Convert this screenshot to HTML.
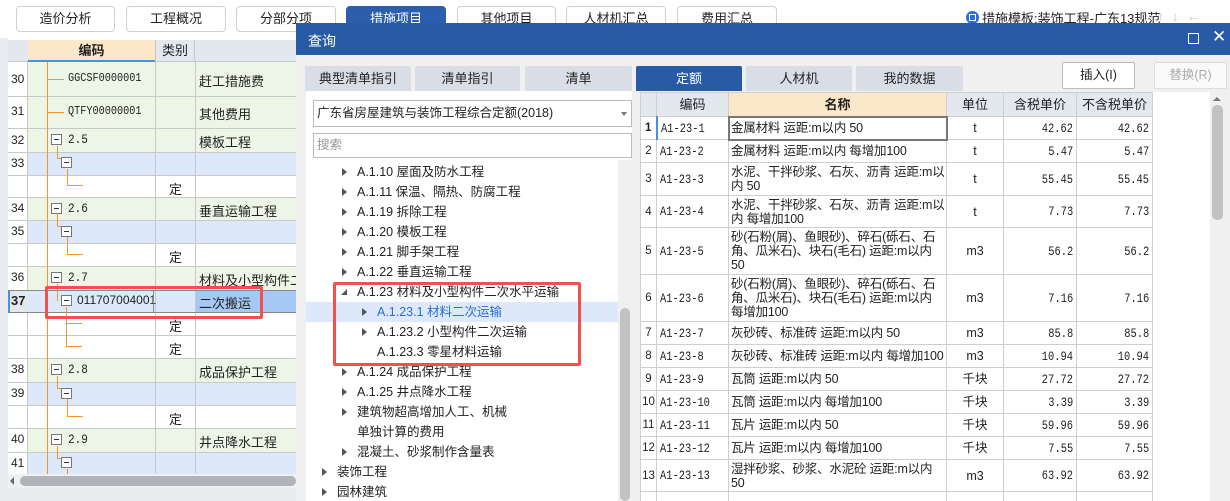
<!DOCTYPE html>
<html><head><meta charset="utf-8"><style>
*{margin:0;padding:0;box-sizing:border-box}
html,body{width:1230px;height:501px;overflow:hidden}
body{background:#fff;position:relative;font-family:"Liberation Sans","Noto Sans CJK SC",sans-serif;font-size:12px;color:#222}
div{position:absolute}
.btn{top:6px;height:26px;border:1px solid #d0d0d0;border-radius:4px;background:#fff;text-align:center;line-height:24px;font-size:13px}
.mono{font-family:"Liberation Mono","Noto Sans CJK SC",monospace;font-size:12px;transform:scaleX(0.85);transform-origin:left}
.tab{top:66px;height:25px;background:#d9dee6;text-align:center;line-height:25px;font-size:13px;border-radius:2px 2px 0 0}
.tr{left:0;font-size:12.5px;height:20px;line-height:20px;white-space:nowrap}
.arr{width:0;height:0;border-left:5px solid #555;border-top:4px solid transparent;border-bottom:4px solid transparent}
.ln{background:#f0962e}
.bx{width:11px;height:11px;border:1px solid #777;background:#fff}
.bx:after{content:"";position:absolute;left:2px;top:4px;width:5px;height:1px;background:#333}
td{border:1px solid #cfcfcf;padding:0 3px;vertical-align:middle;line-height:14px}
td.m{white-space:nowrap;overflow:hidden;padding:0 2px;letter-spacing:-0.2px}
td.n{padding:0;text-align:center;font-size:11.5px}
td.c span{display:inline-block;font-family:"Liberation Mono",monospace;font-size:13px;transform:scaleX(0.8);transform-origin:left}
td.u{text-align:center}
td.p{text-align:right}
td.p span{display:inline-block;font-family:"Liberation Mono",monospace;font-size:13px;transform:scaleX(0.8);transform-origin:right}
tr.h td{background:#e3e8ef;text-align:center;height:24px;font-size:13px}
</style></head><body>
<div style="left:0;top:0;width:8px;height:501px;background:#e8ebf0"></div>
<div style="left:0;top:0;width:1230px;height:38px;background:#fff"></div>
<div class="btn" style="left:16px;width:99px">造价分析</div>
<div class="btn" style="left:126px;width:100px">工程概况</div>
<div class="btn" style="left:236px;width:100px">分部分项</div>
<div class="btn" style="left:346px;width:100px;background:#2b5fae;color:#fff;border-color:#2b5fae">措施项目</div>
<div class="btn" style="left:457px;width:99px">其他项目</div>
<div class="btn" style="left:566px;width:100px">人材机汇总</div>
<div class="btn" style="left:677px;width:100px">费用汇总</div>
<div style="left:966px;top:11px;width:13px;height:13px;border-radius:50%;background:#2b6fd6"></div>
<div style="left:969px;top:14px;width:7px;height:7px;border:1px solid #fff"></div>
<div style="left:982px;top:8px;font-size:13px">措施模板:装饰工程-广东13规范</div>
<div style="left:1157px;top:8px;font-size:14px;color:#c8c8c8">↑ &nbsp;↓ &nbsp;←</div>

<div style="left:8px;top:40px;width:290px;height:22px;background:#e3e8ef;border-bottom:1px solid #c8c8c8"></div>
<div style="left:28px;top:40px;width:127px;height:22px;background:#fde7c9;border-bottom:2px solid #4a90e2;text-align:center;line-height:21px;font-weight:bold;font-size:13px">编码</div>
<div style="left:155px;top:40px;width:40px;height:22px;border-left:1px solid #c8c8c8;border-right:1px solid #c8c8c8;text-align:center;line-height:22px;font-size:13px">类别</div>

<div style="left:8px;top:62px;width:288px;height:412px;background:#fff"></div>
<div style="left:8px;top:62px;width:288px;height:66px;background:#edf6e6"></div>
<div style="left:8px;top:128px;width:288px;height:24px;background:#edf6e6"></div>
<div style="left:8px;top:152px;width:288px;height:23px;background:#dde8fa"></div>
<div style="left:8px;top:197px;width:288px;height:23px;background:#edf6e6"></div>
<div style="left:8px;top:220px;width:288px;height:23px;background:#dde8fa"></div>
<div style="left:8px;top:266px;width:288px;height:24px;background:#edf6e6"></div>
<div style="left:8px;top:290px;width:288px;height:22px;background:#dde8fa"></div>
<div style="left:195px;top:290px;width:101px;height:22px;background:#a6c8f5"></div>
<div style="left:8px;top:358px;width:288px;height:24px;background:#edf6e6"></div>
<div style="left:8px;top:382px;width:288px;height:23px;background:#dde8fa"></div>
<div style="left:8px;top:428px;width:288px;height:24px;background:#edf6e6"></div>
<div style="left:8px;top:452px;width:288px;height:22px;background:#dde8fa"></div>
<div style="left:8px;top:62px;width:20px;height:412px;background:#fff;border-right:1px solid #c8c8c8"></div>
<div style="left:8px;top:290px;width:20px;height:22px;background:#e3e8ef;border-left:2px solid #4a90e2"></div>
<div style="left:155px;top:62px;width:1px;height:412px;background:#c8c8c8"></div>
<div style="left:195px;top:62px;width:1px;height:412px;background:#c8c8c8"></div>
<div style="left:8px;top:96px;width:288px;height:1px;background:#c8c8c8"></div>
<div style="left:8px;top:128px;width:288px;height:1px;background:#c8c8c8"></div>
<div style="left:8px;top:152px;width:288px;height:1px;background:#c8c8c8"></div>
<div style="left:8px;top:175px;width:288px;height:1px;background:#c8c8c8"></div>
<div style="left:8px;top:197px;width:288px;height:1px;background:#c8c8c8"></div>
<div style="left:8px;top:220px;width:288px;height:1px;background:#c8c8c8"></div>
<div style="left:8px;top:243px;width:288px;height:1px;background:#c8c8c8"></div>
<div style="left:8px;top:266px;width:288px;height:1px;background:#c8c8c8"></div>
<div style="left:8px;top:290px;width:288px;height:1px;background:#888"></div>
<div style="left:8px;top:312px;width:288px;height:1px;background:#888"></div>
<div style="left:8px;top:335px;width:288px;height:1px;background:#c8c8c8"></div>
<div style="left:8px;top:358px;width:288px;height:1px;background:#c8c8c8"></div>
<div style="left:8px;top:382px;width:288px;height:1px;background:#c8c8c8"></div>
<div style="left:8px;top:405px;width:288px;height:1px;background:#c8c8c8"></div>
<div style="left:8px;top:428px;width:288px;height:1px;background:#c8c8c8"></div>
<div style="left:8px;top:452px;width:288px;height:1px;background:#c8c8c8"></div>
<div style="left:11px;top:72px">30</div>
<div style="left:11px;top:104px">31</div>
<div style="left:11px;top:133px">32</div>
<div style="left:11px;top:156px">33</div>
<div style="left:11px;top:201px">34</div>
<div style="left:11px;top:224px">35</div>
<div style="left:11px;top:270px">36</div>
<div style="left:11px;top:293px;font-weight:bold;font-size:13px">37</div>
<div style="left:11px;top:362px">38</div>
<div style="left:11px;top:386px">39</div>
<div style="left:11px;top:432px">40</div>
<div style="left:11px;top:456px">41</div>
<div class="ln" style="left:47px;top:62px;width:1px;height:412px"></div>
<div class="ln" style="left:48px;top:79px;width:16px;height:1px"></div>
<div class="ln" style="left:48px;top:112px;width:16px;height:1px"></div>
<div class="ln" style="left:57px;top:146px;width:1px;height:12px"></div><div class="ln" style="left:57px;top:158px;width:5px;height:1px"></div>
<div class="ln" style="left:67px;top:169px;width:1px;height:16px"></div><div class="ln" style="left:67px;top:185px;width:16px;height:1px"></div>
<div class="ln" style="left:57px;top:214px;width:1px;height:12px"></div><div class="ln" style="left:57px;top:226px;width:5px;height:1px"></div>
<div class="ln" style="left:67px;top:237px;width:1px;height:17px"></div><div class="ln" style="left:67px;top:254px;width:16px;height:1px"></div>
<div class="ln" style="left:57px;top:284px;width:1px;height:17px"></div>
<div class="ln" style="left:66px;top:307px;width:1px;height:40px"></div><div class="ln" style="left:66px;top:323px;width:16px;height:1px"></div><div class="ln" style="left:66px;top:346px;width:16px;height:1px"></div>
<div class="ln" style="left:57px;top:376px;width:1px;height:12px"></div><div class="ln" style="left:57px;top:388px;width:5px;height:1px"></div>
<div class="ln" style="left:67px;top:399px;width:1px;height:17px"></div><div class="ln" style="left:67px;top:416px;width:16px;height:1px"></div>
<div class="ln" style="left:57px;top:446px;width:1px;height:12px"></div><div class="ln" style="left:57px;top:458px;width:5px;height:1px"></div>
<div class="ln" style="left:67px;top:469px;width:1px;height:5px"></div>
<div class="bx" style="left:51px;top:134px"></div>
<div class="bx" style="left:61px;top:157px"></div>
<div class="bx" style="left:51px;top:203px"></div>
<div class="bx" style="left:61px;top:226px"></div>
<div class="bx" style="left:51px;top:272px"></div>
<div class="bx" style="left:61px;top:295px"></div>
<div class="bx" style="left:51px;top:364px"></div>
<div class="bx" style="left:61px;top:388px"></div>
<div class="bx" style="left:51px;top:434px"></div>
<div class="bx" style="left:61px;top:457px"></div>
<div class="mono" style="left:68px;top:71px">GGCSF0000001</div>
<div class="mono" style="left:68px;top:104px">QTFY00000001</div>
<div class="mono" style="left:68px;top:132px;font-size:13px">2.5</div>
<div class="mono" style="left:68px;top:201px;font-size:13px">2.6</div>
<div class="mono" style="left:68px;top:270px;font-size:13px">2.7</div>
<div style="left:77px;top:293px;font-size:12px">011707004001</div>
<div class="mono" style="left:68px;top:362px;font-size:13px">2.8</div>
<div class="mono" style="left:68px;top:432px;font-size:13px">2.9</div>
<div style="left:153px;top:290px;width:1px;height:22px;background:#888"></div>
<div style="left:169px;top:179px;font-size:13px">定</div>
<div style="left:169px;top:247px;font-size:13px">定</div>
<div style="left:169px;top:316px;font-size:13px">定</div>
<div style="left:169px;top:339px;font-size:13px">定</div>
<div style="left:169px;top:409px;font-size:13px">定</div>
<div style="left:199px;top:71px;font-size:13px">赶工措施费</div>
<div style="left:199px;top:104px;font-size:13px">其他费用</div>
<div style="left:199px;top:132px;font-size:13px">模板工程</div>
<div style="left:199px;top:201px;font-size:13px">垂直运输工程</div>
<div style="left:199px;top:270px;font-size:13px;white-space:nowrap">材料及小型构件二次</div>
<div style="left:199px;top:293px;font-size:13px">二次搬运</div>
<div style="left:199px;top:362px;font-size:13px">成品保护工程</div>
<div style="left:199px;top:432px;font-size:13px">井点降水工程</div>
<div style="left:45px;top:286px;width:218px;height:33px;border:3px solid #f05050;border-radius:2px"></div>
<div style="left:8px;top:474px;width:288px;height:14px;background:#eef0f3"></div>
<div style="left:20px;top:476px;width:276px;height:10px;background:#b0b3b8;border-radius:5px"></div>
<div style="left:10px;top:477px;width:0;height:0;border-right:4px solid #666;border-top:4px solid transparent;border-bottom:4px solid transparent"></div>
<div style="left:8px;top:488px;width:288px;height:13px;background:#e9ecef"></div>

<div style="left:296px;top:23px;width:934px;height:478px;background:#f0f0f0"></div>
<div style="left:296px;top:23px;width:934px;height:32px;background:#275ba6"></div>
<div style="left:308px;top:31px;color:#fff;font-size:14px">查询</div>
<div style="left:1188px;top:33px;width:11px;height:11px;border:1.5px solid #fff"></div>
<div style="left:1212px;top:27px;color:#fff;font-size:17px">✕</div>

<div class="tab" style="left:305px;width:106px">典型清单指引</div>
<div class="tab" style="left:415px;width:105px">清单指引</div>
<div class="tab" style="left:525px;width:107px">清单</div>
<div class="tab" style="left:636px;width:106px;background:#275ba6;color:#fff">定额</div>
<div class="tab" style="left:746px;width:106px">人材机</div>
<div class="tab" style="left:856px;width:107px">我的数据</div>
<div style="left:1062px;top:62px;width:73px;height:27px;border:1px solid #bbb;background:#fff;border-radius:2px;text-align:center;line-height:25px;font-size:12.5px">插入(I)</div>
<div style="left:1154px;top:62px;width:73px;height:27px;border:1px solid #ddd;background:#fafafa;border-radius:2px;text-align:center;line-height:25px;font-size:12.5px;color:#aaa">替换(R)</div>

<div style="left:306px;top:91px;width:326px;height:410px;background:#fff"></div>
<div style="left:313px;top:100px;width:319px;height:27px;border:1px solid #bbb;background:#fff;line-height:25px;padding-left:3px;font-size:12.5px">广东省房屋建筑与装饰工程综合定额(2018)</div>
<div style="left:621px;top:112px;width:0;height:0;border-top:4px solid #777;border-left:3px solid transparent;border-right:3px solid transparent"></div>
<div style="left:313px;top:133px;width:319px;height:25px;border:1px solid #bbb;background:#fff;line-height:23px;padding-left:3px;font-size:12.5px;color:#999">搜索</div>
<div style="left:618px;top:160px;width:14px;height:341px;background:#f0f0f0"></div>
<div style="left:620px;top:308px;width:10px;height:193px;background:#c2c2c2;border-radius:5px"></div>
<div style="left:306px;top:302px;width:312px;height:20px;background:#dde8fa"></div>
<div style="left:306px;top:162px;width:312px;height:339px;overflow:hidden">
<div class="arr" style="left:36px;top:6px"></div><div class="tr" style="left:51px;top:0">A.1.10 屋面及防水工程</div>
<div class="arr" style="left:36px;top:26px"></div><div class="tr" style="left:51px;top:20px">A.1.11 保温、隔热、防腐工程</div>
<div class="arr" style="left:36px;top:46px"></div><div class="tr" style="left:51px;top:40px">A.1.19 拆除工程</div>
<div class="arr" style="left:36px;top:66px"></div><div class="tr" style="left:51px;top:60px">A.1.20 模板工程</div>
<div class="arr" style="left:36px;top:86px"></div><div class="tr" style="left:51px;top:80px">A.1.21 脚手架工程</div>
<div class="arr" style="left:36px;top:106px"></div><div class="tr" style="left:51px;top:100px">A.1.22 垂直运输工程</div>
<div style="left:35px;top:127px;width:0;height:0;border-bottom:6px solid #555;border-left:6px solid transparent"></div><div class="tr" style="left:51px;top:120px">A.1.23 材料及小型构件二次水平运输</div>
<div class="arr" style="left:56px;top:146px"></div><div class="tr" style="left:71px;top:140px;color:#2a6fd8">A.1.23.1 材料二次运输</div>
<div class="arr" style="left:56px;top:166px"></div><div class="tr" style="left:71px;top:160px">A.1.23.2 小型构件二次运输</div>
<div class="tr" style="left:71px;top:180px">A.1.23.3 零星材料运输</div>
<div class="arr" style="left:36px;top:206px"></div><div class="tr" style="left:51px;top:200px">A.1.24 成品保护工程</div>
<div class="arr" style="left:36px;top:226px"></div><div class="tr" style="left:51px;top:220px">A.1.25 井点降水工程</div>
<div class="arr" style="left:36px;top:246px"></div><div class="tr" style="left:51px;top:240px">建筑物超高增加人工、机械</div>
<div class="tr" style="left:51px;top:260px">单独计算的费用</div>
<div class="arr" style="left:36px;top:286px"></div><div class="tr" style="left:51px;top:280px">混凝土、砂浆制作含量表</div>
<div class="arr" style="left:16px;top:306px"></div><div class="tr" style="left:31px;top:300px">装饰工程</div>
<div class="arr" style="left:16px;top:326px"></div><div class="tr" style="left:31px;top:320px">园林建筑</div>
</div>
<div style="left:333px;top:282px;width:248px;height:84px;border:3px solid #f05050;border-radius:2px"></div>

<div style="left:640px;top:92px;width:570px;height:409px;background:#fff;overflow:hidden">
<table style="border-collapse:collapse;font-size:12.5px;table-layout:fixed;width:512px">
<colgroup><col style="width:16px"><col style="width:72px"><col style="width:218px"><col style="width:57px"><col style="width:73px"><col style="width:76px"></colgroup>
<tr class="h"><td></td><td>编码</td><td style="background:#fde7c9;font-weight:bold">名称</td><td>单位</td><td>含税单价</td><td>不含税单价</td></tr>
<tr style="height:23px"><td class="n" style="font-weight:bold;border-right:2px solid #4a90e2">1</td><td class="c"><span>A1-23-1</span></td><td class="m" style="outline:2px solid #777;outline-offset:-1px">金属材料 运距:m以内 50</td><td class="u">t</td><td class="p"><span>42.62</span></td><td class="p"><span>42.62</span></td></tr>
<tr style="height:23px"><td class="n">2</td><td class="c"><span>A1-23-2</span></td><td class="m">金属材料 运距:m以内 每增加100</td><td class="u">t</td><td class="p"><span>5.47</span></td><td class="p"><span>5.47</span></td></tr>
<tr style="height:33px"><td class="n">3</td><td class="c"><span>A1-23-3</span></td><td class="m">水泥、干拌砂浆、石灰、沥青 运距:m以<br>内 50</td><td class="u">t</td><td class="p"><span>55.45</span></td><td class="p"><span>55.45</span></td></tr>
<tr style="height:32px"><td class="n">4</td><td class="c"><span>A1-23-4</span></td><td class="m">水泥、干拌砂浆、石灰、沥青 运距:m以<br>内 每增加100</td><td class="u">t</td><td class="p"><span>7.73</span></td><td class="p"><span>7.73</span></td></tr>
<tr style="height:47px"><td class="n">5</td><td class="c"><span>A1-23-5</span></td><td class="m">砂(石粉(屑)、鱼眼砂)、碎石(砾石、石<br>角、瓜米石)、块石(毛石) 运距:m以内<br>50</td><td class="u">m3</td><td class="p"><span>56.2</span></td><td class="p"><span>56.2</span></td></tr>
<tr style="height:47px"><td class="n">6</td><td class="c"><span>A1-23-6</span></td><td class="m">砂(石粉(屑)、鱼眼砂)、碎石(砾石、石<br>角、瓜米石)、块石(毛石) 运距:m以内<br>每增加100</td><td class="u">m3</td><td class="p"><span>7.16</span></td><td class="p"><span>7.16</span></td></tr>
<tr style="height:23px"><td class="n">7</td><td class="c"><span>A1-23-7</span></td><td class="m">灰砂砖、标准砖 运距:m以内 50</td><td class="u">m3</td><td class="p"><span>85.8</span></td><td class="p"><span>85.8</span></td></tr>
<tr style="height:23px"><td class="n">8</td><td class="c"><span>A1-23-8</span></td><td class="m">灰砂砖、标准砖 运距:m以内 每增加100</td><td class="u">m3</td><td class="p"><span>10.94</span></td><td class="p"><span>10.94</span></td></tr>
<tr style="height:23px"><td class="n">9</td><td class="c"><span>A1-23-9</span></td><td class="m">瓦筒 运距:m以内 50</td><td class="u">千块</td><td class="p"><span>27.72</span></td><td class="p"><span>27.72</span></td></tr>
<tr style="height:23px"><td class="n">10</td><td class="c"><span>A1-23-10</span></td><td class="m">瓦筒 运距:m以内 每增加100</td><td class="u">千块</td><td class="p"><span>3.39</span></td><td class="p"><span>3.39</span></td></tr>
<tr style="height:23px"><td class="n">11</td><td class="c"><span>A1-23-11</span></td><td class="m">瓦片 运距:m以内 50</td><td class="u">千块</td><td class="p"><span>59.96</span></td><td class="p"><span>59.96</span></td></tr>
<tr style="height:23px"><td class="n">12</td><td class="c"><span>A1-23-12</span></td><td class="m">瓦片 运距:m以内 每增加100</td><td class="u">千块</td><td class="p"><span>7.55</span></td><td class="p"><span>7.55</span></td></tr>
<tr style="height:32px"><td class="n">13</td><td class="c"><span>A1-23-13</span></td><td class="m">湿拌砂浆、砂浆、水泥砼 运距:m以内<br>50</td><td class="u">m3</td><td class="p"><span>63.92</span></td><td class="p"><span>63.92</span></td></tr>
<tr style="height:32px"><td class="n">14</td><td class="c"><span>A1-23-14</span></td><td class="m">湿拌砂浆、砂浆、水泥砼 运距:m以内</td><td class="u">m3</td><td class="p"></td><td class="p"></td></tr>
</table>
</div>
<div style="left:1210px;top:92px;width:15px;height:409px;background:#f0f0f0"></div>
<div style="left:1212px;top:105px;width:11px;height:115px;background:#c2c2c2;border-radius:5px"></div>
<div style="left:1213px;top:97px;width:0;height:0;border-bottom:4px solid #777;border-left:4px solid transparent;border-right:4px solid transparent"></div>
</body></html>
